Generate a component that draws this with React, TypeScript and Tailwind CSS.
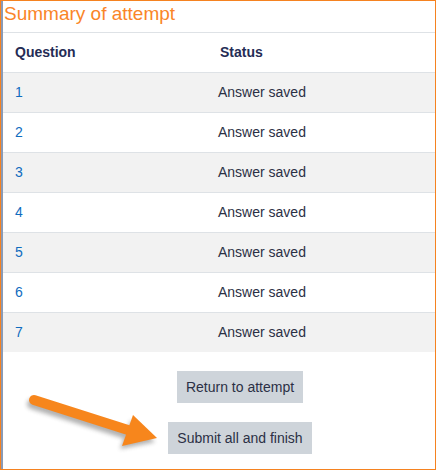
import React from "react";

const rows = [1, 2, 3, 4, 5, 6, 7];

const Arrow: React.FC = () => (
  <svg
    className="absolute left-[20px] top-[385px]"
    width="150"
    height="75"
    viewBox="0 0 150 75"
  >
    <defs>
      <filter id="sh" x="-20%" y="-40%" width="140%" height="180%">
        <feGaussianBlur stdDeviation="2" />
      </filter>
    </defs>
    {/* shadow */}
    <g transform="translate(-2,4)" opacity="0.45" filter="url(#sh)">
      <line x1="14" y1="15" x2="108" y2="45" stroke="#555" strokeWidth="10" strokeLinecap="round" />
      <polygon points="113,31 137,53 102,60" fill="#555" />
    </g>
    <line x1="14" y1="15" x2="108" y2="45" stroke="#f7861c" strokeWidth="10" strokeLinecap="round" />
    <polygon points="113,30 137,53 102,61" fill="#f7861c" />
  </svg>
);

const App: React.FC = () => {
  return (
    <div
      className="w-[438px] h-[471px] bg-white relative"
      style={{ fontFamily: '"Liberation Sans", Arial, sans-serif' }}
    >
      <div className="w-[436px] h-[470px] border border-[#f58220] flex">
        <div className="w-[2px] bg-[#8b9ab4]" />
        <div className="flex-1 flex flex-col">
          <div className="h-[31px] pl-[1px] text-[19px] leading-[22px] text-[#fa8528] pt-[2px]">
            Summary of attempt
          </div>
          <div className="border-t border-[#dee2e6] h-[40px] flex items-center text-[14px] font-bold text-[#252c55]">
            <div className="w-[205px] pl-[12px]">Question</div>
            <div className="pl-[12px]">Status</div>
          </div>
          {rows.map((n) => (
            <div
              key={n}
              className={`border-t border-[#dee2e6] h-[40px] flex items-center text-[14px] ${
                n % 2 === 1 ? "bg-[#f2f2f2]" : "bg-white"
              }`}
            >
              <div className="w-[205px] pl-[12px] text-[#0f6cbf]">{n}</div>
              <div className="pl-[10px] text-[#2b3045]">Answer saved</div>
            </div>
          ))}
          <div className="flex flex-col items-center pl-[42px] pt-[19px] gap-[19px]">
            <button className="h-[32px] px-[9px] bg-[#ced4da] text-[14px] text-[#2b3045]">
              Return to attempt
            </button>
            <button className="h-[32px] px-[9px] bg-[#ced4da] text-[14px] text-[#2b3045]">
              Submit all and finish
            </button>
          </div>
        </div>
      </div>
      <Arrow />
    </div>
  );
};

export default App;
